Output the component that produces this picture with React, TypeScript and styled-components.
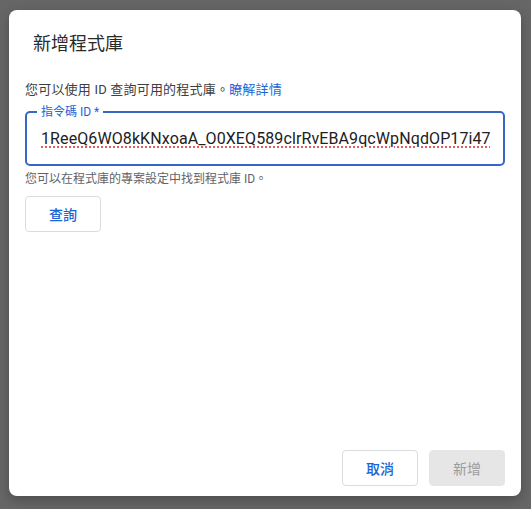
import React from "react";
import styled, { createGlobalStyle } from "styled-components";

const Global = createGlobalStyle`
  html, body { margin: 0; padding: 0; background: #666666; }
  body { font-family: Roboto, "Noto Sans CJK TC", "Noto Sans", sans-serif; }
  * { box-sizing: border-box; }
`;

const Backdrop = styled.div`
  width: 531px;
  height: 509px;
  padding: 10px 10px 13px 9px;
  background: #666666;
`;

const Dialog = styled.div`
  width: 512px;
  height: 486px;
  background: #ffffff;
  border-radius: 8px;
  box-shadow: 0 4px 12px rgba(0, 0, 0, 0.25);
  display: flex;
  flex-direction: column;
  padding: 22px 16px 10px 16px;
`;

const Title = styled.h2`
  margin: 0 0 0 8px;
  font-size: 18px;
  line-height: 24px;
  font-weight: 400;
  color: #2a2a2a;
`;

const Body = styled.div`
  flex: 1;
  display: flex;
  flex-direction: column;
  align-items: flex-start;
  padding-top: 24px;
`;

const Description = styled.p`
  margin: 0;
  font-size: 13px;
  line-height: 20px;
  color: #3c4043;
  letter-spacing: 0.2px;
`;

const Link = styled.a`
  color: #1a64d6;
  text-decoration: none;
`;

const Field = styled.div`
  position: relative;
  margin-top: 11px;
  width: 480px;
  height: 55px;
  border: 2px solid #3767c6;
  border-radius: 5px;
`;

const FieldInner = styled.div`
  width: 100%;
  height: 100%;
  display: flex;
  align-items: center;
  padding: 0 14px;
  overflow: hidden;
`;

const FieldLabel = styled.span`
  position: absolute;
  top: -9px;
  left: 10px;
  padding: 0 4px;
  background: #ffffff;
  font-size: 12px;
  line-height: 16px;
  color: #1a64d6;
  white-space: nowrap;
`;

const FieldValue = styled.span`
  font-size: 16px;
  line-height: 22px;
  color: #202124;
  white-space: nowrap;
  text-decoration: underline dotted #e0342b;
  text-underline-offset: 3px;
  letter-spacing: 0.1px;
`;

const Helper = styled.p`
  margin: 5px 0 0 0;
  font-size: 12px;
  line-height: 16px;
  color: #5f6368;
`;

const Button = styled.button<{ $disabled?: boolean }>`
  width: 76px;
  height: 36px;
  border-radius: 4px;
  font-family: inherit;
  font-size: 14px;
  border: 1px solid ${(p) => (p.$disabled ? "#e6e6e6" : "#dadce0")};
  background: ${(p) => (p.$disabled ? "#e6e6e6" : "#ffffff")};
  color: ${(p) => (p.$disabled ? "#9c9c9c" : "#1a64d6")};
  font-weight: ${(p) => (p.$disabled ? 400 : 500)};
  cursor: pointer;
`;

const QueryButton = styled(Button)`
  margin-top: 9px;
`;

const Footer = styled.div`
  display: flex;
  justify-content: flex-end;
  gap: 11px;
`;

export default function App() {
  return (
    <>
      <Global />
      <Backdrop>
        <Dialog>
          <Title>新增程式庫</Title>
          <Body>
            <Description>
              您可以使用 ID 查詢可用的程式庫。<Link href="#">瞭解詳情</Link>
            </Description>
            <Field>
              <FieldLabel>指令碼 ID *</FieldLabel>
              <FieldInner>
                <FieldValue>1ReeQ6WO8kKNxoaA_O0XEQ589clrRvEBA9qcWpNqdOP17i47</FieldValue>
              </FieldInner>
            </Field>
            <Helper>您可以在程式庫的專案設定中找到程式庫 ID。</Helper>
            <QueryButton>查詢</QueryButton>
          </Body>
          <Footer>
            <Button>取消</Button>
            <Button $disabled>新增</Button>
          </Footer>
        </Dialog>
      </Backdrop>
    </>
  );
}
